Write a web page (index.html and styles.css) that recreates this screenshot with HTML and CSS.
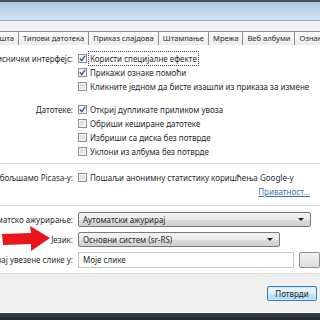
FILE: index.html
```html
<!DOCTYPE html>
<html>
<head>
    <meta charset="utf-8">
    <title>Опције</title>
    <link rel="stylesheet" href="styles.css">
</head>
<body>
    <!-- наслов прозора -->
    <div class="titlebar"></div>

    <!-- картице -->
    <div class="band">
        <div class="tabs">
            <div class="tab first">Општа</div>
            <div class="tab">Типови датотека</div>
            <div class="tab">Приказ слајдова</div>
            <div class="tab">Штампање</div>
            <div class="tab">Мрежа</div>
            <div class="tab">Веб албуми</div>
            <div class="tab">Ознаке са лицима</div>
        </div>
    </div>

    <div class="panel">
        <div class="group">
            <div class="row">
                <div class="lbl"><span>Кориснички интерфејс:</span></div>
                <div class="cb"><i class="box on"><svg width="9" height="9" viewBox="0 0 9 9"><path d="M1.8 4.6 L3.7 6.6 L7.2 1.8" fill="none" stroke="#3d5a99" stroke-width="1.4"/></svg></i><span class="focus">Користи специјалне ефекте</span></div>
            </div>
            <div class="row">
                <div class="lbl"></div>
                <div class="cb"><i class="box on"><svg width="9" height="9" viewBox="0 0 9 9"><path d="M1.8 4.6 L3.7 6.6 L7.2 1.8" fill="none" stroke="#3d5a99" stroke-width="1.4"/></svg></i><span>Прикажи ознаке помоћи</span></div>
            </div>
            <div class="row">
                <div class="lbl"></div>
                <div class="cb"><i class="box"></i><span>Кликните једном да бисте изашли из приказа за измене</span></div>
            </div>
        </div>

        <div class="group">
            <div class="row">
                <div class="lbl"><span>Датотеке:</span></div>
                <div class="cb"><i class="box on"><svg width="9" height="9" viewBox="0 0 9 9"><path d="M1.8 4.6 L3.7 6.6 L7.2 1.8" fill="none" stroke="#3d5a99" stroke-width="1.4"/></svg></i><span>Откриј дупликате приликом увоза</span></div>
            </div>
            <div class="row">
                <div class="lbl"></div>
                <div class="cb"><i class="box"></i><span>Обриши кеширане датотеке</span></div>
            </div>
            <div class="row">
                <div class="lbl"></div>
                <div class="cb"><i class="box"></i><span>Избриши са диска без потврде</span></div>
            </div>
            <div class="row">
                <div class="lbl"></div>
                <div class="cb"><i class="box"></i><span>Уклони из албума без потврде</span></div>
            </div>
        </div>

        <div class="sep"></div>

        <div class="row">
            <div class="lbl"><span>Помозите нам да побољшамо Picasa-у:</span></div>
            <div class="cb"><i class="box"></i><span>Пошаљи анонимну статистику коришћења Google-у</span></div>
        </div>
        <div class="linkrow"><a href="#">Приватност...</a></div>

        <div class="sep"></div>

        <div class="row field">
            <div class="lbl"><span>Аутоматско ажурирање:</span></div>
            <div class="select wide">Аутоматски ажурирај<b class="arrow"></b></div>
        </div>
        <div class="row field">
            <div class="lbl"><span>Језик:</span></div>
            <div class="select">Основни систем (sr-RS)<b class="arrow"></b></div>
            <svg class="pointer" width="52" height="26" viewBox="0 0 52 26"><path d="M2 8 L31 7 L30 0 L50 12 L31 25 L31 18 L3 19 Z" fill="#e8151b"/></svg>
        </div>
        <div class="row field">
            <div class="lbl"><span>Сачувај увезене слике у:</span></div>
            <div class="input">Моје слике</div>
            <div class="browse"></div>
        </div>
    </div>

    <div class="footer">
        <button class="ok">Потврди</button>
    </div>
    <div class="taskbar"></div>
</body>
</html>
```

FILE: styles.css
```css
    body {
        margin: 0;
        width: 320px;
        height: 320px;
        overflow: hidden;
        background: #f0f0f0;
        font-family: "Noto Sans", "Open Sans", sans-serif;
        font-size: 8px;
        color: #2a2a2a;
    }
    /* наслов */
    .titlebar {
        height: 18px;
        border-top: 2px solid #4b4f55;
        background: linear-gradient(#abc6e3, #c4d9ef 60%, #d1e2f3);
        border-bottom: 1px solid #93a8bf;
    }
    .band {
        height: 9px;
        background: #eef2f6;
    }
    /* картице */
    .tabs {
        display: flex;
        margin-left: -16px;
        padding-top: 10px;
        height: 14px;
        background: #eef2f6;
        border-bottom: 1px solid #8e9092;
    }
    .tab {
        padding: 0 4px;
        height: 13px;
        line-height: 13px;
        font-size: 7.6px;
        white-space: nowrap;
        border: 1px solid #8e9092;
        border-bottom: none;
        border-left: none;
        background: linear-gradient(#fbfbfb, #ececec);
    }
    .tab.first {
        border-left: 1px solid #8e9092;
    }
    /* главни панел */
    .panel {
        margin-top: 15px;
        background: #fff;
        padding: 6px 0 6px;
        height: 216px;
        border-bottom: 1px solid #dcdcdc;
    }
    .group + .group {
        margin-top: 9px;
    }
    .row {
        display: flex;
        align-items: center;
        height: 14px;
        position: relative;
    }
    .lbl {
        width: 73px;
        flex: none;
        display: flex;
        justify-content: flex-end;
        white-space: nowrap;
        margin-right: 5px;
    }
    .cb {
        display: flex;
        align-items: center;
        white-space: nowrap;
    }
    .box {
        width: 7px;
        height: 7px;
        border: 1px solid #8f8f8f;
        background: linear-gradient(135deg, #d8d8d8, #f2f2f2);
        margin-right: 3px;
        position: relative;
        box-shadow: inset 0 0 0 1px #f4f4f4;
    }
    .box.on {
        background: #f6f6f6;
    }
    .box svg {
        position: absolute;
        left: -1px;
        top: -1px;
    }
    .focus {
        outline: 1px dotted #444;
        outline-offset: 1px;
    }
    .sep {
        height: 1px;
        background: #d6d9dc;
        margin: 5px 0 6px;
    }
    .linkrow {
        display: flex;
        justify-content: flex-end;
        height: 16px;
        line-height: 16px;
        padding-right: 10px;
    }
    .linkrow a {
        color: #3a6fb6;
    }
    .field {
        height: 15px;
        margin-bottom: 5px;
    }
    .select {
        position: relative;
        width: 196px;
        height: 13px;
        line-height: 13px;
        padding-left: 4px;
        border: 1px solid #7a7a7a;
        border-radius: 2px;
        background: linear-gradient(#f2f2f2, #ebebeb 50%, #dddddd 51%, #cfcfcf);
    }
    .select.wide {
        width: 227px;
    }
    .arrow {
        position: absolute;
        right: 6px;
        top: 5px;
        border-left: 3px solid transparent;
        border-right: 3px solid transparent;
        border-top: 3px solid #222;
    }
    .input {
        width: 226px;
        height: 14px;
        line-height: 14px;
        padding-left: 4px;
        border: 1px solid #c6c9ce;
        background: #fff;
    }
    .browse {
        width: 20px;
        height: 14px;
        margin-left: 5px;
        border: 1px solid #8e8f8f;
        border-radius: 2px;
        background: linear-gradient(#f2f2f2, #dddddd);
    }
    .pointer {
        position: absolute;
        left: 0;
        top: -6px;
    }
    /* доњи део */
    .footer {
        height: 38px;
        display: flex;
        justify-content: flex-end;
        align-items: center;
        padding-right: 3px;
        border-bottom: 1px solid #f8f8f8;
    }
    .ok {
        width: 50px;
        height: 15px;
        padding: 0;
        font: inherit;
        color: #1e1e1e;
        border: 1px solid #3c7fb1;
        border-radius: 2px;
        background: linear-gradient(#eaf6fd, #d9f0fc 50%, #bee6fd 51%, #a7d9f5);
        box-shadow: inset 0 0 0 1px #c8ecfd;
    }
    .taskbar {
        height: 10px;
        background: linear-gradient(#3b4249, #1b1f24);
    }
```
